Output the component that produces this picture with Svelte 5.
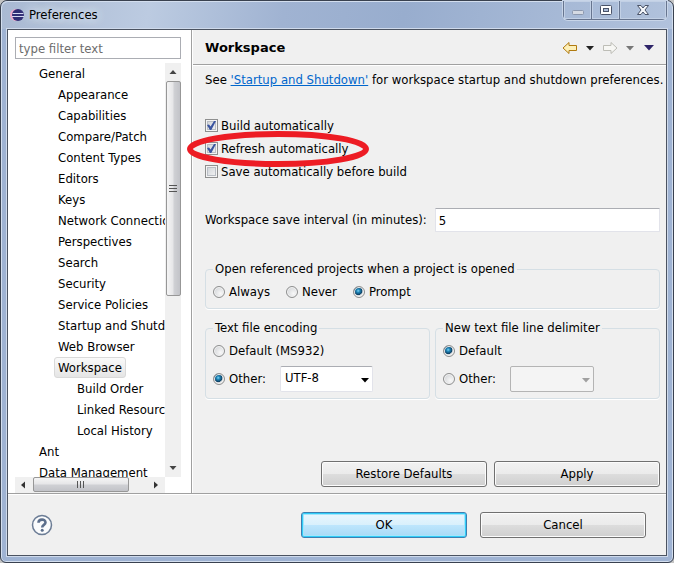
<script>
  const tree = [
    { label: "General", level: 0 },
    { label: "Appearance", level: 1 },
    { label: "Capabilities", level: 1 },
    { label: "Compare/Patch", level: 1 },
    { label: "Content Types", level: 1 },
    { label: "Editors", level: 1 },
    { label: "Keys", level: 1 },
    { label: "Network Connections", level: 1 },
    { label: "Perspectives", level: 1 },
    { label: "Search", level: 1 },
    { label: "Security", level: 1 },
    { label: "Service Policies", level: 1 },
    { label: "Startup and Shutdown", level: 1 },
    { label: "Web Browser", level: 1 },
    { label: "Workspace", level: 1 },
    { label: "Build Order", level: 2 },
    { label: "Linked Resources", level: 2 },
    { label: "Local History", level: 2 },
    { label: "Ant", level: 0 },
    { label: "Data Management", level: 0 },
  ];

  let selected = $state("Workspace");
  let filter = $state("");
  let build = $state(true);
  let refresh = $state(true);
  let saveBefore = $state(false);
  let interval = $state("5");
  let openProjects = $state("Prompt");
  let encoding = $state("other");
  let charset = $state("UTF-8");
  let delimiter = $state("default");
</script>

<div class="window">
  <header class="titlebar">
    <svg class="logo" viewBox="0 0 14 14" aria-hidden="true">
      <circle cx="6" cy="7" r="6" fill="#eba9cb" />
      <circle cx="8" cy="7" r="6" fill="#2f2d74" />
      <path d="M2.600 5.500h10.800M2 8.500h12" stroke="#d5d8f2" stroke-width="1" />
    </svg>
    <span class="title">Preferences</span>
    <div class="controls">
      <button class="ctl" aria-label="Minimize" disabled>
        <svg width="14" height="12" viewBox="0 0 14 12"><rect x="1.500" y="6.500" width="11" height="4" rx="1" fill="#d5dae3" stroke="#8c98ae" /></svg>
      </button>
      <button class="ctl" aria-label="Maximize">
        <svg width="14" height="12" viewBox="0 0 14 12"><rect x="1.500" y="1.500" width="11" height="9" rx="1" fill="#fff" stroke="#4a5368" /><rect x="4.500" y="4.500" width="5" height="3" fill="#a9bad6" stroke="#4a5368" /></svg>
      </button>
      <button class="ctl close" aria-label="Close">
        <svg width="14" height="12" viewBox="0 0 14 12"><path d="M1.500 1.500h3.500L7 4l2-2.500h3.500L9 6l3.500 4.500H9L7 8l-2 2.500H1.500L5 6z" fill="#f4f6fa" stroke="#4a5368" stroke-linejoin="round" /></svg>
      </button>
    </div>
  </header>

  <div class="client">
    <div class="body">
      <aside class="sidebar">
        <input class="filter" type="text" aria-label="Filter" placeholder="type filter text" bind:value={filter} />
        <div class="scroller">
          <div class="tree" role="tree">
            {#each tree as item}
              <div class="row level{item.level}">
                <button class="node" class:selected={selected === item.label} role="treeitem" aria-selected={selected === item.label} onclick={() => (selected = item.label)}>{item.label}</button>
              </div>
            {/each}
          </div>
          <div class="vbar">
            <svg class="arrow" viewBox="0 0 16 18"><path d="M4.500 11L8 7l3.500 4z" fill="#444" /></svg>
            <div class="vthumb"><svg width="8" height="8" viewBox="0 0 8 8"><path d="M0 .5h8M0 3.500h8M0 6.500h8" stroke="#555" /></svg></div>
            <svg class="arrow end" viewBox="0 0 16 18"><path d="M4.500 7h7L8 11z" fill="#444" /></svg>
          </div>
          <div class="hbar">
            <svg class="arrow" viewBox="0 0 18 16"><path d="M10 4.500v7L6 8z" fill="#333" /></svg>
            <div class="hthumb"><svg width="8" height="8" viewBox="0 0 8 8"><path d="M.5 0v7M3.500 0v7M6.500 0v7" stroke="#555" /></svg></div>
            <svg class="arrow end" viewBox="0 0 18 16"><path d="M7 4.500v7L11 8z" fill="#333" /></svg>
          </div>
        </div>
      </aside>

      <main class="page">
        <div class="heading">
          <h1>Workspace</h1>
          <nav class="history">
            <button aria-label="Back">
              <svg width="16" height="14" viewBox="0 0 16 14"><path d="M1 7l6-5.500v3h7.500v5H7v3z" fill="#fdf0b8" stroke="#b07a10" stroke-linejoin="round" /></svg>
            </button>
            <button aria-label="Back menu">
              <svg width="8" height="5" viewBox="0 0 8 5"><path d="M0 0h8L4 4.500z" fill="#222" /></svg>
            </button>
            <button class="fwd" aria-label="Forward" disabled>
              <svg width="16" height="14" viewBox="0 0 16 14"><path d="M15 7L9 1.500v3H1.500v5H9v3z" fill="#f7f7f4" stroke="#bdbdb6" stroke-linejoin="round" /></svg>
            </button>
            <button aria-label="Forward menu" disabled>
              <svg width="8" height="5" viewBox="0 0 8 5"><path d="M0 0h8L4 4.500z" fill="#777" /></svg>
            </button>
            <button class="menu" aria-label="Menu">
              <svg width="10" height="6" viewBox="0 0 10 6"><path d="M0 0h10L5 5.500z" fill="#2d2468" /></svg>
            </button>
          </nav>
        </div>

        <div class="content">
          <p class="intro">See <a href="#startup">'Startup and Shutdown'</a> for workspace startup and shutdown preferences.</p>

          <div class="checks">
            <label><input type="checkbox" bind:checked={build} />Build automatically</label>
            <label class="marked">
              <input type="checkbox" bind:checked={refresh} />Refresh automatically
              <svg class="ring" viewBox="0 0 182 38"><ellipse cx="91" cy="19" rx="88" ry="15" fill="none" stroke="#ed1c24" stroke-width="6" /></svg>
            </label>
            <label><input type="checkbox" bind:checked={saveBefore} />Save automatically before build</label>
          </div>

          <div class="interval">
            <label for="interval">Workspace save interval (in minutes):</label>
            <input id="interval" type="text" bind:value={interval} />
          </div>

          <fieldset class="open">
            <legend>Open referenced projects when a project is opened</legend>
            <div class="line spread">
              {#each ["Always", "Never", "Prompt"] as opt}
                <label><input type="radio" name="open" value={opt} bind:group={openProjects} />{opt}</label>
              {/each}
            </div>
          </fieldset>

          <div class="groups">
            <fieldset>
              <legend>Text file encoding</legend>
              <div class="line">
                <label><input type="radio" name="encoding" value="default" bind:group={encoding} />Default (MS932)</label>
              </div>
              <div class="line combo">
                <label><input type="radio" name="encoding" value="other" bind:group={encoding} />Other:</label>
                <div class="select">
                  <select aria-label="Encoding" bind:value={charset} disabled={encoding !== "other"}>
                    <option>UTF-8</option>
                    <option>UTF-16</option>
                    <option>US-ASCII</option>
                  </select>
                  <svg width="8" height="5" viewBox="0 0 8 5"><path d="M0 0h8L4 4.500z" /></svg>
                </div>
              </div>
            </fieldset>

            <fieldset>
              <legend>New text file line delimiter</legend>
              <div class="line">
                <label><input type="radio" name="delimiter" value="default" bind:group={delimiter} />Default</label>
              </div>
              <div class="line combo">
                <label><input type="radio" name="delimiter" value="other" bind:group={delimiter} />Other:</label>
                <div class="select short" class:off={delimiter !== "other"}>
                  <select aria-label="Line delimiter" disabled={delimiter !== "other"}>
                    <option></option>
                    <option>Unix</option>
                    <option>Windows</option>
                  </select>
                  <svg width="8" height="5" viewBox="0 0 8 5"><path d="M0 0h8L4 4.500z" /></svg>
                </div>
              </div>
            </fieldset>
          </div>

          <div class="actions">
            <button class="btn">Restore Defaults</button>
            <button class="btn">Apply</button>
          </div>
        </div>
      </main>
    </div>

    <footer class="footer">
      <button class="help" aria-label="Help">
        <svg width="22" height="22" viewBox="0 0 22 22">
          <circle cx="11" cy="11" r="9.500" fill="#fafbfc" stroke="#6b7c95" stroke-width="1.500" />
          <path d="M7.500 8.800C7.500 4.600 14.500 4.600 14.500 8.500C14.500 11 11.200 10.800 11.200 13.400" fill="none" stroke="#5c6f8c" stroke-width="2.600" />
          <circle cx="11.200" cy="16.200" r="1.500" fill="#5c6f8c" />
        </svg>
      </button>
      <button class="btn primary">OK</button>
      <button class="btn">Cancel</button>
    </footer>
  </div>
</div>

<style>
  :global(body) {
    background: #c4c4c4;
  }
  .window, .window button, .window input, .window select {
    font: 13px/16px "DejaVu Sans Condensed", "DejaVu Sans", sans-serif;
    color: #000;
  }
  .window {
    box-sizing: border-box;
    min-height: 100vh;
    display: flex;
    flex-direction: column;
    padding: 0 6px 6px;
    border: 1px solid #39414f;
    border-radius: 7px 7px 6px 6px;
    background: #9fb3d3;
    box-shadow: inset 0 0 0 1px #d3deee;
  }
  button {
    padding: 0;
    border: 0;
    background: none;
  }
  svg {
    display: block;
    flex-shrink: 0;
  }

  .titlebar {
    display: flex;
    align-items: flex-start;
    height: 28px;
    margin: 0 -5px;
    background: linear-gradient(100deg, #a9b9d2 0%, #bccbe1 22%, #a0b3d2 42%, #98adce 60%, #b1c2dc 100%);
    border-radius: 6px 6px 0 0;
    box-shadow: inset 0 1px 0 #d3deee;
  }
  .logo {
    width: 14px;
    height: 14px;
    margin: 7px 5px 0 8px;
  }
  .title {
    padding: 6px 0;
    flex: 1;
    text-shadow: 0 0 8px #e6eefa, 0 0 12px #e6eefa;
  }
  .controls {
    display: flex;
    margin-right: 5px;
    border: 1px solid #67758f;
    border-top: 0;
    border-radius: 0 0 5px 5px;
    box-shadow: 0 0 0 1px #c8d5e8;
  }
  .window .ctl {
    display: flex;
    align-items: center;
    justify-content: center;
    width: 28px;
    height: 18px;
    border-right: 1px solid #67758f;
    box-shadow: inset 0 0 0 1px #c2d0e5;
  }
  .window .ctl.close {
    width: 46px;
    border-right: 0;
  }

  .client {
    flex: 1;
    display: flex;
    flex-direction: column;
    background: #f0f0f0;
    border: 1px solid #4b5361;
    box-shadow: 0 0 0 1px #cfdaeb;
  }
  .body {
    flex: 1;
    display: flex;
    border-bottom: 1px solid #a0a0a0;
  }

  .sidebar {
    box-sizing: border-box;
    width: 184px;
    flex-shrink: 0;
    display: flex;
    flex-direction: column;
    gap: 4px;
    padding: 7px 10px 0 7px;
    background: #fff;
    border-right: 1px solid #a0a0a0;
  }
  .window .filter {
    box-sizing: border-box;
    width: 100%;
    height: 22px;
    padding: 0 3px;
    border: 1px solid #abadb3;
    outline: 0;
  }
  .filter::placeholder {
    color: #6d6d6d;
    opacity: 1;
  }
  .scroller {
    flex: 1;
    display: grid;
    grid-template-columns: minmax(0, 1fr) 16px;
    grid-template-rows: minmax(0, 1fr) 16px;
  }
  .tree {
    height: 0;
    min-height: 100%;
    overflow: hidden;
  }
  .row {
    height: 21px;
    display: flex;
    padding-left: 20px;
  }
  .row.level1 {
    padding-left: 39px;
  }
  .row.level2 {
    padding-left: 58px;
  }
  .node {
    flex-shrink: 0;
    box-sizing: border-box;
    height: 21px;
    padding: 0 3px;
    border: 1px solid transparent;
    white-space: nowrap;
  }
  .window .node.selected {
    border: 1px solid #d9d9d9;
    border-radius: 3px;
    background: linear-gradient(#fafafa, #e5e5e5);
  }
  .vbar, .hbar {
    display: flex;
    background: #f0f0f0;
  }
  .vbar {
    flex-direction: column;
    align-items: center;
  }
  .vbar .arrow {
    width: 16px;
    height: 18px;
  }
  .hbar .arrow {
    width: 18px;
    height: 16px;
  }
  .arrow.end {
    margin-top: auto;
  }
  .hbar .arrow.end {
    margin: 0 0 0 auto;
  }
  .vthumb, .hthumb {
    box-sizing: border-box;
    display: flex;
    align-items: center;
    justify-content: center;
    border: 1px solid #979797;
    border-radius: 2px;
  }
  .vthumb {
    width: 15px;
    height: 52%;
    background: linear-gradient(to right, #f5f5f5, #e6e6e8 45%, #cfd0d4 55%, #c2c3c8);
  }
  .hthumb {
    width: 64%;
    height: 15px;
    background: linear-gradient(#f5f5f5, #e6e6e8 45%, #cfd0d4 55%, #c2c3c8);
  }

  .page {
    flex: 1;
    min-width: 0;
    display: flex;
    flex-direction: column;
    border-left: 1px solid #fff;
  }
  .heading {
    display: flex;
    align-items: center;
    justify-content: space-between;
    height: 34px;
    padding: 0 12px;
    border-bottom: 1px solid #a0a0a0;
    box-shadow: 0 1px 0 #fff;
  }
  h1 {
    margin: 0;
    padding-top: 2px;
    font: bold 13px/16px "DejaVu Sans", sans-serif;
  }
  .history {
    display: flex;
    align-items: center;
    gap: 8px;
    padding-top: 2px;
  }
  .menu {
    margin-left: 2px;
  }
  .content {
    flex: 1;
    display: flex;
    flex-direction: column;
    padding: 7px 6px 6px 12px;
  }
  .intro {
    margin: 0 0 26px;
    white-space: nowrap;
  }
  a {
    color: #0066cc;
  }
  .checks {
    display: flex;
    flex-direction: column;
    align-items: flex-start;
  }
  .checks label {
    display: flex;
    align-items: center;
    gap: 3px;
    height: 23px;
  }
  .checks .marked {
    position: relative;
  }
  .ring {
    position: absolute;
    left: -18px;
    top: -7px;
    width: 182px;
    height: 38px;
    pointer-events: none;
  }
  input[type="checkbox"] {
    appearance: none;
    box-sizing: border-box;
    width: 13px;
    height: 13px;
    margin: 0;
    border: 1px solid #8e8f8f;
    background: linear-gradient(135deg, #cbcfd5, #f6f6f6);
    box-shadow: inset 0 0 0 1px #f4f4f4, inset 0 0 0 2px #b9bec5;
  }
  input[type="checkbox"]:checked::before {
    content: "";
    display: block;
    width: 9px;
    height: 9px;
    margin: 1px;
    background: #3b55a0;
    clip-path: polygon(0 45%, 22% 38%, 40% 62%, 78% 0, 100% 0, 48% 100%, 32% 100%);
  }
  input[type="radio"] {
    appearance: none;
    box-sizing: border-box;
    width: 12px;
    height: 12px;
    margin: 0;
    border: 1px solid #8e8f8f;
    border-radius: 50%;
    background: radial-gradient(circle at 65% 65%, #f8f8f8, #c9ccd0);
    box-shadow: inset 0 0 0 1px #f4f4f4;
  }
  input[type="radio"]:checked {
    background: radial-gradient(circle at 42% 38%, #7fd4f5 0, #1f86b8 20%, #0d3f63 46%, #b5c0c8 52%, #e8e8e8 60%);
  }

  .interval {
    display: flex;
    align-items: center;
    gap: 8px;
    margin: 25px 0 29px;
  }
  .interval input {
    flex: 1;
    min-width: 0;
    box-sizing: border-box;
    height: 24px;
    padding: 0 3px;
    border: 1px solid #e2e3ea;
    border-top-color: #abadb3;
    border-radius: 1px;
    outline: 0;
  }

  fieldset {
    min-width: 0;
    margin: 0;
    padding: 3px 7px 4px;
    border: 1px solid #d5dfe5;
    border-radius: 4px;
    box-shadow: 0 1px 0 #fff;
  }
  legend {
    padding: 0 2px;
    white-space: nowrap;
  }
  .line {
    display: flex;
    align-items: center;
    height: 24px;
  }
  .line label {
    display: flex;
    align-items: center;
    gap: 4px;
    white-space: nowrap;
  }
  .line.spread {
    gap: 16px;
  }
  .line.combo {
    gap: 14px;
    height: 31px;
  }
  .groups {
    display: grid;
    grid-template-columns: 1fr 1fr;
    gap: 5px;
    margin-top: 11px;
  }
  .select {
    position: relative;
    width: 93px;
  }
  .select.short {
    width: 84px;
  }
  .select svg {
    position: absolute;
    right: 4px;
    top: 12px;
    pointer-events: none;
  }
  .window select {
    display: block;
    appearance: none;
    box-sizing: border-box;
    width: 100%;
    height: 26px;
    padding: 0 16px 2px 4px;
    border: 1px solid #e2e3ea;
    border-top-color: #abadb3;
    border-radius: 2px;
    background: #fff;
    opacity: 1;
  }
  .window .off select {
    border-color: #b4b4b4;
    background: #f4f4f4;
  }
  .off svg {
    fill: #a0a0a0;
  }

  .actions {
    display: flex;
    justify-content: flex-end;
    gap: 7px;
    margin-top: auto;
  }
  .window .btn {
    width: 166px;
    height: 26px;
    border: 1px solid #707070;
    border-radius: 3px;
    background: linear-gradient(#f2f2f2, #ebebeb 49%, #dddddd 50%, #cfcfcf);
    box-shadow: inset 0 0 0 1px #fcfcfc;
  }
  .window .btn.primary {
    border-color: #3c7fb1;
    background: linear-gradient(#eaf6fd, #d9f0fc 49%, #bee6fd 50%, #a7d9f5);
    box-shadow: inset 0 0 0 1px #31cdf8, inset 0 0 0 2px #a5e5fb;
  }

  .footer {
    display: flex;
    align-items: center;
    gap: 13px;
    height: 60px;
    padding-right: 20px;
    border-top: 1px solid #fff;
  }
  .help {
    margin: 0 auto 0 23px;
  }
</style>
